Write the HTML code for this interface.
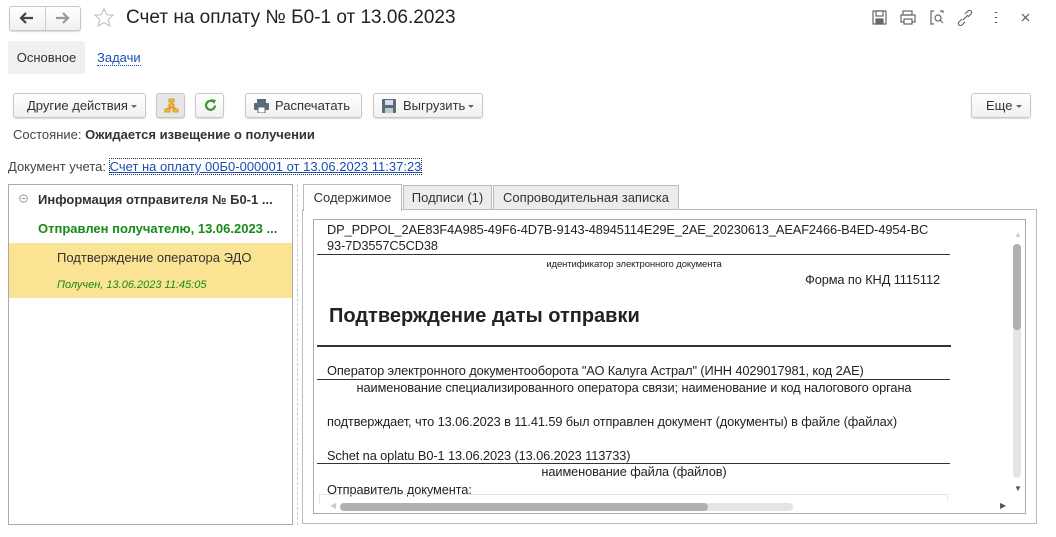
<!DOCTYPE html>
<html><head><meta charset="utf-8"><style>
*{box-sizing:border-box;margin:0;padding:0}
body{width:1056px;height:537px;background:#fff;font-family:"Liberation Sans",sans-serif;font-size:13px;color:#333;position:relative;overflow:hidden}
.a{position:absolute;white-space:nowrap}
.btn{position:absolute;height:25px;border:1px solid #c8c8c8;border-radius:3px;background:linear-gradient(#fff,#f0f0f0);box-shadow:0 1px 1px rgba(0,0,0,.15);font-size:13px;line-height:23px;color:#333}
.dd:after{content:"";position:absolute;right:8px;top:11px;border:3px solid transparent;border-top:3px solid #666}
.n{color:#222;font-size:12.8px;letter-spacing:-0.1px}
.ln{position:absolute;height:1px;background:#333}
.c{position:absolute;left:0;width:640px;text-align:center}
</style></head><body>
<div class="btn" style="left:9px;top:6px;width:72px;height:25px"></div>
<div class="a" style="left:45px;top:7px;width:1px;height:23px;background:#ccc"></div>
<svg class="a" style="left:18px;top:11px" width="16" height="14"><path d="M15 7H3M8 2L3 7l5 5" stroke="#444" stroke-width="2.2" fill="none"/></svg>
<svg class="a" style="left:55px;top:11px" width="16" height="14"><path d="M1 7h12M8 2l5 5-5 5" stroke="#999" stroke-width="2.2" fill="none"/></svg>
<svg class="a" style="left:93px;top:7px" width="22" height="22"><path d="M11 1.5l2.6 6.2 6.6.5-5 4.3 1.6 6.5L11 15.5 5.2 19l1.6-6.5-5-4.3 6.6-.5z" fill="none" stroke="#bbb" stroke-width="1"/></svg>
<div class="a" style="left:126px;top:7px;font-size:19px;color:#222">Счет на оплату № Б0-1 от 13.06.2023</div>
<svg class="a" style="left:872px;top:10px" width="160" height="16" fill="none" stroke="#666" stroke-width="1.2">
<rect x="1" y="1" width="13" height="13"/><rect x="4" y="1" width="7" height="5"/><rect x="4" y="9" width="7" height="5" fill="#666"/>
<rect x="31" y="1" width="9" height="4"/><rect x="29" y="5" width="14" height="7"/><rect x="32" y="9" width="8" height="5" fill="#fff"/>
<path d="M62 1h-3v13h3M68 1h3v2"/><circle cx="66" cy="8" r="3"/><path d="M68 10l3 3"/>
<path d="M90 9l-3 3a2 2 0 0 0 3 3l3-3M96 7l3-3a2 2 0 0 0-3-3l-3 3M91 10l5-5"/>
<path d="M124 2v1M124 7v1M124 12v1" stroke-width="2.4" stroke="#555"/>
<path d="M150 4l7 7M157 4l-7 7" stroke="#555"/>
</svg>
<div class="a" style="left:8px;top:41px;width:77px;height:33px;background:#f0f0f0;border-radius:3px;line-height:33px;text-align:center;color:#333">Основное</div>
<div class="a" style="left:97px;top:50px;color:#1b4fb4;border-bottom:1px dotted #1b4fb4;line-height:15px">Задачи</div>

<div class="btn dd" style="left:13px;top:93px;width:133px;padding-left:13px">Другие действия</div>
<div class="btn" style="left:156px;top:93px;width:29px;background:#e6e6e6"><svg style="position:absolute;left:7px;top:4px" width="15" height="15" fill="#f2c14e" stroke="#d08a00" stroke-width=".8"><rect x="5" y="1" width="5" height="3"/><rect x="5" y="6" width="5" height="3"/><rect x="1" y="11" width="5" height="3"/><rect x="9" y="11" width="5" height="3"/><path d="M7.5 4v2M7.5 9v1M3.5 10h8v1M3.5 10v1" fill="none"/></svg></div>
<div class="btn" style="left:195px;top:93px;width:29px"><svg style="position:absolute;left:7px;top:4px" width="15" height="15"><path d="M12 7.5A4.5 4.5 0 1 1 10 3.6" fill="none" stroke="#3a9a2a" stroke-width="2.2"/><path d="M8 1l5 1-2 4z" fill="#3a9a2a"/></svg></div>
<div class="btn" style="left:245px;top:93px;width:117px;padding-left:29px"><svg style="position:absolute;left:8px;top:5px" width="15" height="14" fill="#5a6b7c"><rect x="3" y="0" width="9" height="4"/><rect x="0" y="4" width="15" height="7" rx="1"/><rect x="4" y="8" width="7" height="6" fill="#fff" stroke="#5a6b7c"/></svg>Распечатать</div>
<div class="btn dd" style="left:373px;top:93px;width:110px;padding-left:29px"><svg style="position:absolute;left:8px;top:5px" width="14" height="14" fill="#5a6b7c"><rect width="14" height="14" rx="1"/><rect x="3" y="1" width="8" height="5" fill="#dde"/><rect x="3" y="9" width="8" height="5" fill="#bcc"/></svg>Выгрузить</div>
<div class="btn dd" style="left:971px;top:93px;width:60px;padding-left:14px">Еще</div>

<div class="a" style="left:13px;top:127px;color:#444">Состояние: <b style="color:#333">Ожидается извещение о получении</b></div>
<div class="a" style="left:8px;top:159px;color:#444">Документ учета: <span style="color:#1b4fb4;text-decoration:underline;outline:1px dotted #333">Счет на оплату 00Б0-000001 от 13.06.2023 11:37:23</span></div>

<div class="a" style="left:8px;top:184px;width:285px;height:341px;border:1px solid #aaa"></div>
<div class="a" style="left:297px;top:184px;width:1px;height:341px;border-left:1px dashed #ccc"></div>
<svg class="a" style="left:19px;top:194px" width="9" height="9"><circle cx="4.5" cy="4.5" r="3.8" fill="none" stroke="#999"/><path d="M2.5 4.5h4" stroke="#999"/></svg>
<div class="a" style="left:38px;top:192px;font-weight:bold;color:#333">Информация отправителя № Б0-1 ...</div>
<div class="a" style="left:38px;top:221px;font-weight:bold;color:#178a17">Отправлен получателю, 13.06.2023 ...</div>
<div class="a" style="left:9px;top:243px;width:283px;height:55px;background:#fbe394"></div>
<div class="a" style="left:57px;top:250px;color:#333">Подтверждение оператора ЭДО</div>
<div class="a" style="left:57px;top:279px;font-size:11px;font-style:italic;color:#178a17">Получен, 13.06.2023 11:45:05</div>

<div class="a" style="left:302px;top:209px;width:735px;height:315px;border:1px solid #bbb"></div>
<div class="a" style="left:303px;top:184px;width:99px;height:27px;background:#fff;border:1px solid #bbb;border-bottom:none;line-height:25px;text-align:center;color:#333">Содержимое</div>
<div class="a" style="left:403px;top:185px;width:89px;height:25px;background:#ececec;border:1px solid #bbb;line-height:23px;text-align:center">Подписи (1)</div>
<div class="a" style="left:493px;top:185px;width:186px;height:25px;background:#ececec;border:1px solid #bbb;line-height:23px;text-align:center">Сопроводительная записка</div>

<div class="a" style="left:313px;top:219px;width:713px;height:295px;border:1px solid #aaa;overflow:hidden">
 <div class="a n" style="left:13px;top:2px">DP_PDPOL_2AE83F4A985-49F6-4D7B-9143-48945114E29E_2AE_20230613_AEAF2466-B4ED-4954-BC</div>
 <div class="a n" style="left:13px;top:18px">93-7D3557C5CD38</div>
 <div class="ln" style="left:3px;top:34px;width:633px"></div>
 <div class="c n" style="top:39px;font-size:9.5px">идентификатор электронного документа</div>
 <div class="a n" style="right:85px;top:52px">Форма по КНД 1115112</div>
 <div class="a" style="left:15px;top:85px;font-size:20px;font-weight:bold;color:#222">Подтверждение даты отправки</div>
 <div class="ln" style="left:3px;top:125px;width:634px;height:2px"></div>
 <div class="a n" style="left:13px;top:143px">Оператор электронного документооборота "АО Калуга Астрал" (ИНН 4029017981, код 2АЕ)</div>
 <div class="ln" style="left:3px;top:159px;width:633px"></div>
 <div class="c n" style="top:160px">наименование специализированного оператора связи; наименование и код налогового органа</div>
 <div class="a n" style="left:13px;top:194px">подтверждает, что 13.06.2023 в 11.41.59 был отправлен документ (документы) в файле (файлах)</div>
 <div class="a n" style="left:13px;top:228px">Schet na oplatu B0-1 13.06.2023 (13.06.2023 113733)</div>
 <div class="ln" style="left:3px;top:243px;width:633px"></div>
 <div class="c n" style="top:244px">наименование файла (файлов)</div>
 <div class="a n" style="left:13px;top:262px">Отправитель документа:</div>
 <div class="a" style="left:5px;top:274px;width:629px;height:10px;border:1px solid #e4e4e4;border-bottom:none"></div>
 <div class="a" style="left:14px;top:280px;width:653px;height:15px;background:#fff"></div>
 <div class="a" style="left:26px;top:283px;width:453px;height:8px;background:#e4e4e4;border-radius:4px"></div>
 <div class="a" style="left:26px;top:283px;width:368px;height:8px;background:#b0b0b0;border-radius:4px"></div>
 <div class="a" style="left:699px;top:24px;width:8px;height:234px;background:#e4e4e4;border-radius:4px"></div>
 <div class="a" style="left:699px;top:24px;width:8px;height:86px;background:#b0b0b0;border-radius:4px"></div>
 <div class="a" style="left:700px;top:264px;font-size:8px;color:#555">▼</div>
 <div class="a" style="left:700px;top:10px;font-size:8px;color:#ccc">▲</div>
 <div class="a" style="left:16px;top:281px;font-size:8px;color:#ccc">◀</div>
 <div class="a" style="left:686px;top:281px;font-size:8px;color:#555">▶</div>
</div>
</body></html>
